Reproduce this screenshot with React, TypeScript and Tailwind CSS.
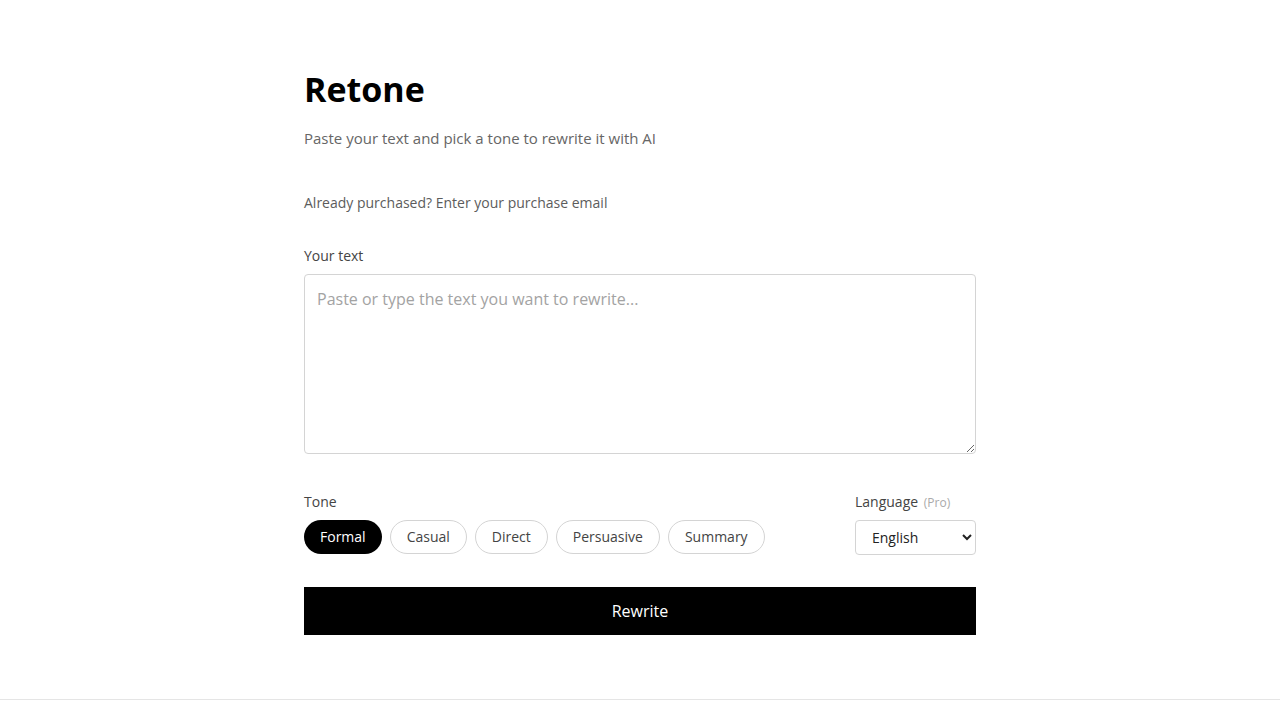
import { useState } from 'react';

const TONES = ['Formal', 'Casual', 'Direct', 'Persuasive', 'Summary'];

export default function App() {
  const [tone, setTone] = useState('Formal');
  const [text, setText] = useState('');

  return (
    <div className="min-h-screen bg-white text-black" style={{ fontFamily: '"Open Sans", "Liberation Sans", sans-serif' }}>
      <main className="mx-auto w-[672px] pt-[65px] pb-16">
        <h1 className="text-[34px] font-bold leading-[48px]">Retone</h1>
        <p className="mt-[14px] text-[15px] leading-[22px] text-[#666]">
          Paste your text and pick a tone to rewrite it with AI
        </p>

        <button type="button" className="mt-[44px] block text-sm leading-5 text-[#5c5c5c]">
          Already purchased? Enter your purchase email
        </button>

        <label htmlFor="text" className="mt-[33px] block text-sm leading-5 text-[#444]">
          Your text
        </label>
        <textarea
          id="text"
          value={text}
          onChange={(e) => setText(e.target.value)}
          placeholder="Paste or type the text you want to rewrite..."
          className="mt-2 block h-[180px] w-full rounded border border-[#d4d4d4] px-3 py-3 text-base text-[#222] placeholder:text-[#a3a3a3] focus:outline-none"
        />

        <div className="mt-[38px] flex items-start justify-between">
          <div>
            <p className="text-sm leading-5 text-[#444]">Tone</p>
            <div className="mt-2 flex gap-2">
              {TONES.map((t) => (
                <button
                  key={t}
                  type="button"
                  onClick={() => setTone(t)}
                  className={`h-[34px] rounded-full px-4 text-sm ${
                    tone === t
                      ? 'bg-black text-white'
                      : 'border border-[#d4d4d4] bg-white text-[#444]'
                  }`}
                >
                  {t}
                </button>
              ))}
            </div>
          </div>
          <div className="w-[121px]">
            <p className="text-sm leading-5 text-[#444]">
              Language <span className="ml-0.5 text-xs text-[#aaa]">(Pro)</span>
            </p>
            <select className="mt-2 h-[35px] w-full rounded border border-[#d4d4d4] bg-white px-3 text-sm text-[#222]">
              <option>English</option>
              <option>Spanish</option>
              <option>French</option>
              <option>German</option>
            </select>
          </div>
        </div>

        <button type="button" className="mt-8 block h-12 w-full bg-black text-base text-white">
          Rewrite
        </button>
      </main>
      <footer className="border-t border-[#e5e5e5] py-6" />
    </div>
  );
}
